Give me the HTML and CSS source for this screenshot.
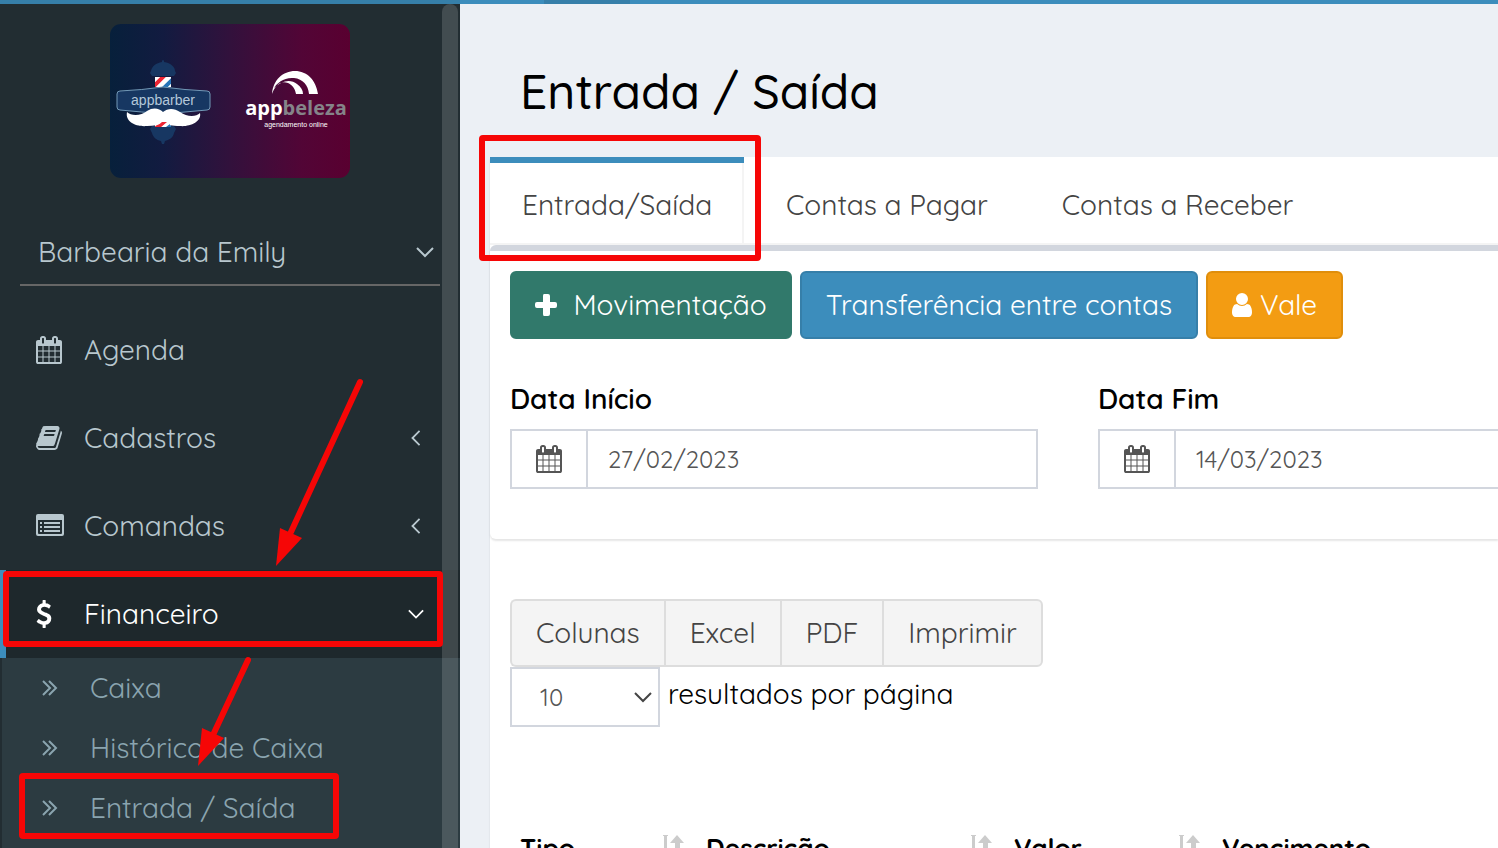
FILE: index.html
```html
<!DOCTYPE html>
<html lang="pt-br">

<head>
  <meta charset="UTF-8" />
  <meta name="viewport" content="width=device-width, initial-scale=1.0" />
  <title>Entrada / Saída</title>
  <link rel="stylesheet" href="styles.css">
</head>

<body>
  <!-- shared icons -->
  <svg class="sprite" aria-hidden="true">
    <symbol id="calendar" viewBox="0 0 1792 1792">
      <path fill-rule="evenodd" d="M192 1664h288v-288h-288v288zM544 1664h320v-288h-320v288zM192 1312h288v-320h-288v320zM544 1312h320v-320h-320v320zM192 928h288v-288h-288v288zM928 1664h320v-288h-320v288zM544 928h320v-288h-320v288zM1312 1664h288v-288h-288v288zM928 1312h320v-320h-320v320zM576 448v-288q0-13-9.500-22.500t-22.500-9.500h-64q-13 0-22.500 9.500t-9.500 22.500v288q0 13 9.500 22.500t22.500 9.500h64q13 0 22.500-9.500t9.500-22.500zM1312 1312h288v-320h-288v320zM928 928h320v-288h-320v288zM1312 928h288v-288h-288v288zM1344 448v-288q0-13-9.500-22.500t-22.500-9.500h-64q-13 0-22.500 9.500t-9.500 22.500v288q0 13 9.500 22.500t22.500 9.500h64q13 0 22.500-9.500t9.500-22.500zM1728 384v1280q0 52-38 90t-90 38h-1408q-52 0-90-38t-38-90v-1280q0-52 38-90t90-38h128v-96q0-66 47-113t113-47h64q66 0 113 47t47 113v96h384v-96q0-66 47-113t113-47h64q66 0 113 47t47 113v96h128q52 0 90 38t38 90z" />
    </symbol>
    <symbol id="angle" viewBox="0 0 18 18">
      <path d="M1 5l8 8 8-8" fill="none" stroke="currentColor" stroke-width="2" />
    </symbol>
    <symbol id="angles" viewBox="0 0 18 18">
      <path d="M2 2l7 7-7 7M8 2l7 7-7 7" fill="none" stroke="currentColor" stroke-width="2" />
    </symbol>
    <symbol id="sort" viewBox="0 0 24 28">
      <path d="M1 1h5v1H1zM2 2h3v16h4l-6 8-5-8h4zM15 1l7 8h-4v16h-5V9H8z" />
    </symbol>
  </svg>

  <header class="topbar"><span class="topbar-toggle"></span></header>

  <div class="wrapper">
    <aside class="sidebar">
      <a class="logo" href="#" aria-label="appbarber appbeleza">
        <svg viewBox="0 0 240 154">
          <defs>
            <linearGradient id="logoBg">
              <stop offset="0" stop-color="#07203b" />
              <stop offset=".22" stop-color="#121b40" />
              <stop offset=".5" stop-color="#32113c" />
              <stop offset=".8" stop-color="#520536" />
              <stop offset="1" stop-color="#590030" />
            </linearGradient>
            <clipPath id="pole"><path d="M45 53h16v10H45zM45 98h16v5H45z" /></clipPath>
          </defs>
          <rect width="240" height="154" rx="11" fill="url(#logoBg)" />
          <g fill="#173762">
            <path d="M52 37q1-2 2 0v1c7 1 11 5 11 9l1 2-2 3H42l-2-3 1-2c1-5 5-8 11-9zM42 102h22l2 3-2 4c-1 5-5 7-9 8l-1 3h-2l-1-3c-5-1-8-4-9-8l-2-4z" />
            <path d="M45 53h16v10H45zM45 98h16v5H45z" fill="#fff" />
          </g>
          <g clip-path="url(#pole)" stroke-width="4">
            <path d="M43 63l12-12M45 105l12-10" stroke="#ed2634" />
            <path d="M53 65l13-13M54 108l12-10" stroke="#2774b7" />
          </g>
          <path d="M10 67q22-1 43-4 22 3 44 4 3 0 3 3v13q0 3-3 3-22 2-44 4-21-2-43-4-3 0-3-3V70q0-3 3-3z" fill="#173762" stroke="#7299b7" />
          <path d="M17 88c4 4 14 4 20-1 6-4 12-3 16 1 5-4 11-4 17 0 7 5 16 5 20 1 2 9-11 14-20 13-8 0-13-1-17-3-4 2-9 3-16 3-11 1-22-4-20-14z" fill="#fff" />
          <path d="M46 103l6-5h5l-6 5z" fill="#ed2634" />
          <path d="M56 103l4-3v3z" fill="#2774b7" />
          <text class="logo-barber" x="53" y="81">appbarber</text>
          <path d="M162 70c1-14 11-23 23-23s21 9 23 23h-9c-1-9-6-15-15-16-10-1-17 5-20 10 8-8 17-9 23-4 4 3 6 6 6 10h-7c-1-6-4-9-8-11-7-3-13 2-16 11z" fill="#fff" />
          <text class="logo-beleza" x="186" y="91"><tspan fill="#fff">app</tspan>beleza</text>
          <text class="logo-sub" x="186" y="103">agendamento online</text>
        </svg>
      </a>

      <button class="company" type="button">
        <span>Barbearia da Emily</span>
        <svg class="angle"><use href="#angle" /></svg>
      </button>

      <nav class="menu">
        <a class="menu-item" href="#">
          <svg class="icon"><use href="#calendar" /></svg>
          <span>Agenda</span>
        </a>
        <a class="menu-item" href="#">
          <svg class="icon" viewBox="0 0 1792 1792"><path d="M1703 478q40 57 18 129l-275 906q-19 64-76.500 107.500t-122.500 43.500h-923q-77 0-148.500-53.500t-99.500-131.500q-24-67-2-127 0-4 3-27t4-37q1-8-3-21.500t-3-19.500q2-11 8-21t16.500-23.500 16.500-23.500q23-38 45-91.500t30-91.500q3-10 .5-30t-.5-28q3-11 17-28t17-23q21-36 42-92t25-90q1-9-2.500-32t.5-28q4-13 22-30.500t22-22.500q19-26 42.500-84.500t27.500-96.500q1-8-3-25.500t-2-26.500q2-8 9-18t18-23 17-21q8-12 16.500-30.500t15-35 16-36 19.500-32 26.500-23.500 36-11.500 47.500 5.500l-1 3q38-9 51-9h761q74 0 114 56t18 130l-274 906q-36 119-71.500 153.500t-128.500 34.500h-869q-27 0-38 15-11 16-1 43 24 70 144 70h923q29 0 56-15.500t35-41.500l300-987q7-22 5-57 38 15 59 43zm-1064 2q-4 13 2 22.500t20 9.500h608q13 0 25.500-9.500t16.500-22.500l21-64q4-13-2-22.500t-20-9.500h-608q-13 0-25.500 9.500t-16.500 22.500zm-83 256q-4 13 2 22.500t20 9.500h608q13 0 25.500-9.500t16.500-22.500l21-64q4-13-2-22.500t-20-9.500h-608q-13 0-25.500 9.500t-16.500 22.500z" /></svg>
          <span>Cadastros</span>
          <svg class="angle left"><use href="#angle" /></svg>
        </a>
        <a class="menu-item" href="#">
          <svg class="icon" viewBox="-1 0 28 28"><path fill-rule="evenodd" d="M2 2h24q2 0 2 2v18q0 2-2 2H2q-2 0-2-2V4q0-2 2-2zM2 8v13q0 1 1 1h22q1 0 1-1V8zM4 10h2v2H4zM8 10h16v2H8zM4 14h2v2H4zM8 14h16v2H8zM4 18h2v2H4zM8 18h16v2H8z" /></svg>
          <span>Comandas</span>
          <svg class="angle left"><use href="#angle" /></svg>
        </a>
        <a class="menu-item active" href="#">
          <svg class="icon" viewBox="320 0 1792 1792"><path d="M1362 1185q0 153-99.500 263.500t-258.500 136.500v175q0 14-9 23t-23 9h-135q-13 0-22.500-9.500t-9.500-22.500v-175q-66-9-127.500-31t-101.500-44.500-74-48-46.500-37.500-17.500-18q-17-21-2-41l103-135q7-10 23-12 15-2 24 9l2 2q113 99 243 125 37 8 74 8 81 0 142.500-43t61.500-122q0-28-15-53t-33.500-42-58.500-37.500-66-32-80-32.500q-39-16-61.500-25t-61.500-26.500-62.500-31-56.500-35.500-53.500-42.500-43.500-49-35.500-58-21-66.500-8.500-78q0-138 98-242t255-134v-180q0-13 9.500-22.500t22.500-9.500h135q14 0 23 9t9 23v176q57 6 110.500 23t87 33.500 63.500 37.500 39 29 15 14q17 18 5 38l-81 146q-8 15-23 16-14 3-27-7-3-3-14.500-12t-39-26.500-58.500-32-74.500-26-85.500-11.500q-95 0-155 43t-60 111q0 26 8.500 48t29.500 41.500 39.500 33 56 31 60.500 27 70 27.500q53 20 81 31.500t76 35 75.500 42.500 62 50 53 63.500 31.500 76.500 13 94z" /></svg>
          <span>Financeiro</span>
          <svg class="angle"><use href="#angle" /></svg>
        </a>
        <div class="submenu">
          <a href="#"><svg class="angles"><use href="#angles" /></svg>Caixa</a>
          <a href="#"><svg class="angles"><use href="#angles" /></svg>Histórico de Caixa</a>
          <a href="#"><svg class="angles"><use href="#angles" /></svg>Entrada / Saída</a>
        </div>
      </nav>
      <div class="scroll-thumb"></div>
    </aside>

    <main class="content">
      <h1>Entrada / Saída</h1>

      <div class="panel">
        <nav class="tabs">
          <a class="tab active" href="#">Entrada/Saída</a>
          <a class="tab" href="#">Contas a Pagar</a>
          <a class="tab" href="#">Contas a Receber</a>
        </nav>

        <section class="box">
          <div class="actions">
            <button class="btn btn-green" type="button">
              <svg class="plus" viewBox="0 0 22 22"><path d="M9 0h4q2 0 2 2v6h5q2 0 2 2v2q0 2-2 2h-5v6q0 2-2 2H9q-1 0-1-2v-6H2q-2 0-2-2v-2q0-2 2-2h6V2q0-2 1-2z" /></svg>
              <span>Movimentação</span>
            </button>
            <button class="btn btn-blue" type="button">Transferência entre contas</button>
            <button class="btn btn-orange" type="button">
              <svg class="user" viewBox="256 0 1280 1792"><path d="M1536 1399q0 109-62.500 187t-150.500 78h-854q-88 0-150.500-78t-62.500-187q0-85 8.500-160.500t31.500-152 58.500-131 94-89 134.500-34.500q131 128 313 128t313-128q76 0 134.500 34.500t94 89 58.500 131 31.500 152 8.500 160.500zm-256-887q0 159-112.500 271.500t-271.500 112.500-271.500-112.500-112.500-271.500 112.500-271.500 271.500-112.500 271.500 112.500 112.500 271.500z" /></svg>
              <span>Vale</span>
            </button>
          </div>

          <form class="filters">
            <div class="field">
              <label for="dataInicio">Data Início</label>
              <div class="input-group">
                <span class="addon"><svg class="icon"><use href="#calendar" /></svg></span>
                <input type="text" id="dataInicio" value="27/02/2023" />
              </div>
            </div>
            <div class="field">
              <label for="dataFim">Data Fim</label>
              <div class="input-group open">
                <span class="addon"><svg class="icon"><use href="#calendar" /></svg></span>
                <input type="text" id="dataFim" value="14/03/2023" />
              </div>
            </div>
          </form>
        </section>

        <section class="results">
          <div class="export">
            <button type="button">Colunas</button>
            <button type="button">Excel</button>
            <button type="button">PDF</button>
            <button type="button">Imprimir</button>
          </div>
          <div class="page-size">
            <div class="select-wrap">
              <select id="pageSize">
                <option>10</option>
                <option>25</option>
                <option>50</option>
              </select>
              <svg class="angle"><use href="#angle" /></svg>
            </div>
            <label for="pageSize">resultados por página</label>
          </div>

          <table>
            <colgroup>
              <col class="col-tipo">
              <col class="col-desc">
              <col class="col-valor">
              <col>
            </colgroup>
            <thead>
              <tr>
                <th><div class="th">Tipo <svg class="sort"><use href="#sort" /></svg></div></th>
                <th><div class="th">Descrição <svg class="sort"><use href="#sort" /></svg></div></th>
                <th><div class="th">Valor <svg class="sort"><use href="#sort" /></svg></div></th>
                <th><div class="th">Vencimento</div></th>
              </tr>
            </thead>
          </table>
        </section>
      </div>
    </main>
  </div>

  <!-- highlights over the screen -->
  <div class="mark mark-tab"></div>
  <div class="mark mark-menu"></div>
  <div class="mark mark-submenu"></div>
  <svg class="arrow arrow-menu" viewBox="0 0 92 190">
    <path d="M85 5L16 155" stroke="#f60606" stroke-width="6" stroke-linecap="round" />
    <path d="M1 189L5 151L27 161z" fill="#f60606" />
  </svg>
  <svg class="arrow arrow-submenu" viewBox="0 0 56 112">
    <path d="M51 5L16 80" stroke="#f60606" stroke-width="6" stroke-linecap="round" />
    <path d="M1 111L5 73L27 83z" fill="#f60606" />
  </svg>
</body>

</html>
```
FILE: styles.css
```css
* {
  box-sizing: border-box;
}

body {
  margin: 0;
  height: 100vh;
  display: flex;
  flex-direction: column;
  overflow: hidden;
  position: relative;
  font-family: Quicksand, Inter, "Open Sans", sans-serif;
  font-size: 28px;
  font-weight: 400;
  line-height: 40px;
  color: #000;
  background: #ecf0f5;
}

button,
input,
select {
  font: inherit;
  color: inherit;
}

a {
  color: inherit;
  text-decoration: none;
}

svg {
  display: block;
  flex: none;
  fill: currentColor;
  overflow: visible;
}

.sprite {
  position: absolute;
  width: 0;
  height: 0;
}

.topbar {
  height: 4px;
  flex: none;
  padding-left: 544px;
  background: linear-gradient(90deg, #367fa9 460px, #3c8dbc 460px);
}

.topbar-toggle {
  display: block;
  width: 86px;
  height: 4px;
  background: #367fa9;
}

.wrapper {
  display: flex;
  flex: 1;
  min-height: 0;
}

/* sidebar */
.sidebar {
  position: relative;
  flex: none;
  width: 460px;
  padding-top: 20px;
  overflow: hidden;
  background: #222d32;
  color: #b8c7ce;
}

.logo {
  display: block;
  width: 240px;
  margin: 0 auto;
}

.logo-barber {
  font: 400 14px "Liberation Sans", sans-serif;
  fill: #b4c8da;
  text-anchor: middle;
}

.logo-beleza {
  font: 700 20px "Open Sans", sans-serif;
  fill: #858489;
  text-anchor: middle;
}

.logo-sub {
  font: 400 7px "Liberation Sans", sans-serif;
  fill: #fff;
  text-anchor: middle;
}

.company {
  display: flex;
  justify-content: space-between;
  align-items: center;
  width: 420px;
  margin: 40px 20px 20px;
  padding: 14px 6px 12px 18px;
  border: 0;
  border-bottom: 2px solid #666;
  background: none;
}

.menu-item {
  display: flex;
  align-items: center;
  height: 88px;
  padding: 0 36px 0 29px;
  border-left: 6px solid transparent;
}

.menu-item span {
  flex: 1;
  margin-left: 21px;
}

.menu-item.active {
  color: #fff;
  background: #1e282c;
  border-left-color: #3c8dbc;
}

.icon {
  width: 28px;
  height: 28px;
}

.angle {
  width: 18px;
  height: 18px;
}

.menu-item .angle {
  width: 16px;
  height: 16px;
}

.angle.left {
  transform: rotate(90deg);
}

.submenu {
  height: 200px;
  border-left: 2px solid #222d32;
  background: #2c3b41;
  color: #8aa4af;
}

.submenu a {
  display: flex;
  align-items: center;
  gap: 31px;
  height: 60px;
  padding-left: 39px;
}

.angles {
  width: 18px;
  height: 18px;
}

.scroll-thumb {
  position: absolute;
  top: 0;
  right: 2px;
  width: 16px;
  height: 1200px;
  border-radius: 8px;
  background: rgba(255, 255, 255, 0.15);
}

/* content */
.content {
  flex: 1;
  min-width: 0;
  padding-left: 30px;
}

h1 {
  margin: 0;
  padding: 57px 0 36px 30px;
  font-size: 48px;
  font-weight: 500;
  line-height: 60px;
}

.panel {
  background: #fff;
  color: #444;
  box-shadow: 0 2px 2px rgba(0, 0, 0, 0.1);
}

.tabs {
  display: flex;
  border-bottom: 2px solid #f4f4f4;
}

.tab {
  height: 86px;
  padding: 28px 32px 0 42px;
}

.tab.active {
  width: 254px;
  padding: 28px 0 0 32px;
  background:
    linear-gradient(#3c8dbc, #3c8dbc) top / 100% 6px no-repeat,
    linear-gradient(#f4f4f4, #f4f4f4) right / 2px 100% no-repeat;
}

.box {
  padding: 20px 0 50px 20px;
  border-top: 6px solid #d2d6de;
  border-radius: 6px 0 0 6px;
  box-shadow: 0 2px 2px rgba(0, 0, 0, 0.1);
}

.actions {
  display: flex;
  gap: 8px;
}

.btn {
  display: flex;
  align-items: center;
  justify-content: center;
  height: 68px;
  padding: 0 23px;
  border: 2px solid;
  border-radius: 6px;
  color: #fff;
  white-space: nowrap;
}

.btn-green {
  gap: 16px;
  min-width: 282px;
  background: #31796b;
  border-color: #31796b;
}

.btn-blue {
  min-width: 398px;
  background: #3c8dbc;
  border-color: #367fa9;
}

.btn-orange {
  gap: 8px;
  min-width: 137px;
  background: #f39c12;
  border-color: #e08e0b;
}

.plus {
  width: 22px;
  height: 22px;
}

.user {
  width: 20px;
  height: 28px;
}

.filters {
  display: grid;
  grid-template-columns: 33fr 25fr;
  gap: 60px;
  margin-top: 40px;
}

.field label {
  display: block;
  margin-bottom: 10px;
  font-weight: 600;
  color: #000;
}

.input-group {
  display: flex;
  height: 60px;
  border: 2px solid #d2d6de;
}

.input-group.open {
  border-right: 0;
}

.addon {
  display: flex;
  align-items: center;
  justify-content: center;
  width: 76px;
  border-right: 2px solid #d2d6de;
  color: #555;
}

.input-group input {
  flex: 1;
  min-width: 0;
  padding: 0 20px;
  border: 0;
  font-size: 24px;
  color: #555;
  background: none;
}

.results {
  padding: 60px 0 0 20px;
}

.export {
  display: flex;
}

.export button {
  height: 68px;
  padding: 0 24px;
  border: 2px solid #ddd;
  border-right-width: 0;
  background: #f4f4f4;
}

.export button:first-child {
  border-radius: 6px 0 0 6px;
}

.export button:last-child {
  border-right-width: 2px;
  border-radius: 0 6px 6px 0;
}

.page-size {
  display: flex;
  gap: 8px;
  color: #000;
}

.page-size label {
  margin-top: 7px;
}

.select-wrap {
  position: relative;
  width: 150px;
}

.select-wrap select {
  display: block;
  width: 100%;
  height: 60px;
  padding: 0 28px;
  border: 2px solid #d2d6de;
  border-radius: 0;
  appearance: none;
  font-size: 24px;
  color: #555;
  background: #fff;
}

.select-wrap .angle {
  position: absolute;
  top: 21px;
  right: 8px;
  color: #444;
  pointer-events: none;
}

table {
  width: 100%;
  margin-top: 101px;
  table-layout: fixed;
  border-collapse: collapse;
  color: #000;
}

.col-tipo {
  width: 186px;
}

.col-desc {
  width: 308px;
}

.col-valor {
  width: 208px;
}

th {
  padding: 0 10px;
  font-size: 26px;
  font-weight: 700;
  text-align: left;
}

.th {
  display: flex;
  justify-content: space-between;
  align-items: center;
}

.sort {
  width: 24px;
  height: 28px;
  color: #ccc;
}

/* red highlights */
.mark {
  position: absolute;
  border: 6px solid #f60606;
  border-radius: 4px;
}

.mark-tab {
  left: 479px;
  top: 135px;
  width: 282px;
  height: 126px;
}

.mark-menu {
  left: 3px;
  top: 571px;
  width: 440px;
  height: 76px;
}

.mark-submenu {
  left: 19px;
  top: 773px;
  width: 320px;
  height: 66px;
}

.arrow {
  position: absolute;
}

.arrow-menu {
  left: 275px;
  top: 377px;
  width: 92px;
  height: 190px;
}

.arrow-submenu {
  left: 197px;
  top: 655px;
  width: 56px;
  height: 112px;
}
```
